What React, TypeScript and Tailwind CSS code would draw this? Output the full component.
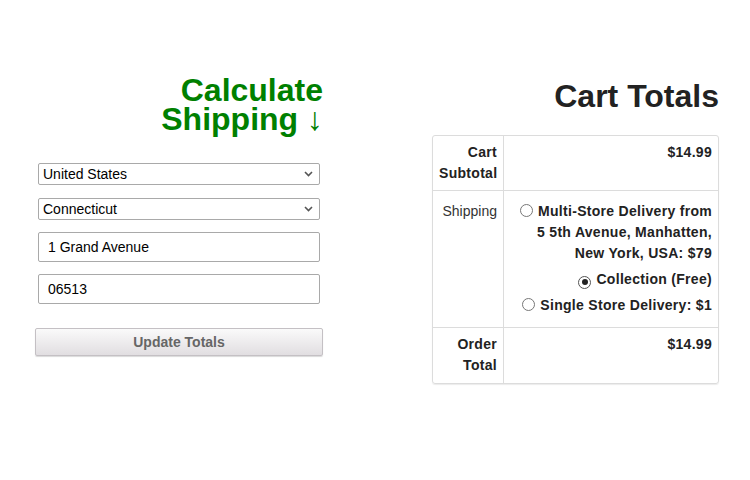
import React from 'react';

const Chevron: React.FC = () => (
  <svg
    className="absolute right-[7px] top-1/2 -translate-y-1/2 pointer-events-none"
    width="9"
    height="6"
    viewBox="0 0 9 6"
    aria-hidden="true"
  >
    <path d="M1 1l3.5 3.5L8 1" fill="none" stroke="#555" strokeWidth="1.6" />
  </svg>
);

const Radio: React.FC<{ checked?: boolean }> = ({ checked }) => (
  <span
    className={
      'inline-flex items-center justify-center w-[13px] h-[13px] rounded-full border bg-white align-[-1px] mr-[5px] ' +
      (checked ? 'border-[#555]' : 'border-[#777]')
    }
  >
    {checked && <span className="w-[6px] h-[6px] rounded-full bg-[#222]" />}
  </span>
);

const App: React.FC = () => {
  return (
    <div className="w-[750px] h-[480px] bg-white font-['Liberation_Sans',Arial,sans-serif] flex pl-[35px] gap-[109px]">
      {/* Calculate shipping */}
      <div className="w-[288px] pt-[76px] flex flex-col">
        <h2 className="text-[32px] leading-[29px] font-bold text-right text-[#008000]">
          Calculate
          <br />
          Shipping <span className="font-normal">↓</span>
        </h2>

        <div className="relative mx-[3px] mt-[29px]">
          <select
            defaultValue="US"
            className="block appearance-none w-full h-[22px] border border-[#a9a9a9] rounded-[2px] bg-white pl-[4px] text-[14px] text-black"
          >
            <option value="US">United States</option>
          </select>
          <Chevron />
        </div>

        <div className="relative mx-[3px] mt-[13px]">
          <select
            defaultValue="CT"
            className="block appearance-none w-full h-[22px] border border-[#a9a9a9] rounded-[2px] bg-white pl-[4px] text-[14px] text-black"
          >
            <option value="CT">Connecticut</option>
          </select>
          <Chevron />
        </div>

        <input
          defaultValue="1 Grand Avenue"
          className="mx-[3px] mt-[12px] h-[30px] border border-[#a9a9a9] rounded-[2px] px-[9px] text-[14px] text-black"
        />
        <input
          defaultValue="06513"
          className="mx-[3px] mt-[12px] h-[30px] border border-[#a9a9a9] rounded-[2px] px-[9px] text-[14px] text-black"
        />

        <button className="mt-[24px] h-[28px] border border-[#c4c0c4] rounded-[2px] bg-gradient-to-b from-[#fafafa] to-[#e1dee1] shadow-[0_1px_1px_rgba(0,0,0,0.15)] text-[14px] font-bold text-[#666]">
          Update Totals
        </button>
      </div>

      {/* Cart totals */}
      <div className="w-[287px] pt-[82px] flex flex-col">
        <h2 className="text-[32px] leading-[29px] font-bold text-right text-[#222]">Cart Totals</h2>

        <div className="mt-[24px] border border-[#dcdcdc] rounded-[3px] shadow-[0_1px_1px_rgba(0,0,0,0.08)] grid grid-cols-[71px_1fr] text-[14px] leading-[21px] text-[#222]">
          <div className="border-r border-b border-[#dcdcdc] px-[6px] pt-[6px] pb-[6px] text-right font-bold tracking-[0.3px]">
            Cart Subtotal
          </div>
          <div className="border-b border-[#dcdcdc] px-[6px] pt-[6px] pb-[6px] text-right font-bold tracking-[0.3px]">
            $14.99
          </div>

          <div className="border-r border-b border-[#dcdcdc] px-[6px] pt-[10px] text-right text-[#333]">
            Shipping
          </div>
          <div className="border-b border-[#dcdcdc] px-[6px] pt-[10px] pb-[11px] text-right font-bold tracking-[0.3px]">
            <ul className="flex flex-col gap-[5px]">
              <li>
                <Radio />
                Multi-Store Delivery from 5 5th Avenue, Manhatten, New York, USA: $79
              </li>
              <li>
                <Radio checked />
                Collection (Free)
              </li>
              <li>
                <Radio />
                Single Store Delivery: $1
              </li>
            </ul>
          </div>

          <div className="border-r border-[#dcdcdc] px-[6px] pt-[6px] pb-[7px] text-right font-bold tracking-[0.3px]">
            Order Total
          </div>
          <div className="px-[6px] pt-[6px] pb-[7px] text-right font-bold tracking-[0.3px]">$14.99</div>
        </div>
      </div>
    </div>
  );
};

export default App;
